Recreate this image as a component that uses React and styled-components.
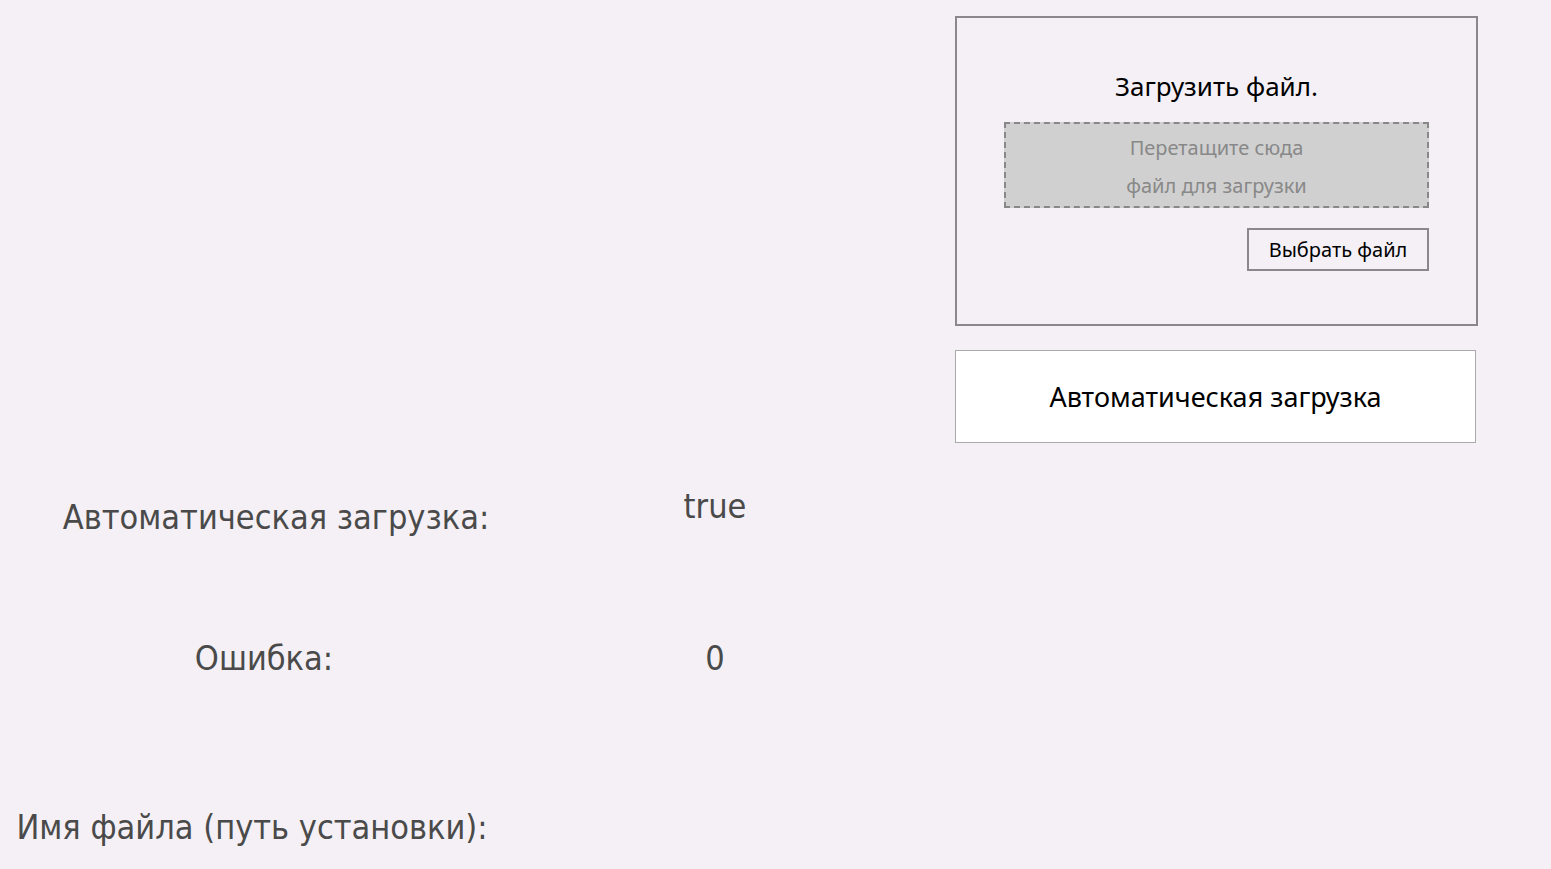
import React from "react";
import styled, { createGlobalStyle } from "styled-components";

const GlobalStyle = createGlobalStyle`
  html, body {
    margin: 0;
    padding: 0;
    background: #f4f0f5;
  }
  body {
    font-family: "Noto Sans", "Open Sans", sans-serif;
  }
`;

const Page = styled.div`
  width: 1551px;
  height: 869px;
  overflow: hidden;
  box-sizing: border-box;
  padding-top: 16px;
`;

const Top = styled.div`
  display: flex;
  justify-content: flex-end;
  padding-right: 73px;
`;

const Side = styled.div`
  width: 523px;
  display: flex;
  flex-direction: column;
  gap: 24px;
`;

const UploadBox = styled.div`
  border: 2px solid #8b888c;
  padding: 48px 47px 53px;
  display: flex;
  flex-direction: column;
  align-items: stretch;
`;

const UploadTitle = styled.div`
  text-align: center;
  font-size: 26px;
  color: #000;
  line-height: 40px;
  margin-bottom: 16px;
`;

const DropZone = styled.div`
  border: 2px dashed #888;
  background: #d0d0d0;
  color: #888;
  font-size: 20px;
  line-height: 38px;
  text-align: center;
  padding: 5px 0 1px;
`;

const PickButton = styled.button`
  align-self: flex-end;
  margin-top: 20px;
  width: 182px;
  height: 43px;
  border: 2px solid #8b888c;
  background: transparent;
  font-family: inherit;
  font-size: 20px;
  color: #000;
  padding: 0;
`;

const AutoButton = styled.button`
  width: 521px;
  height: 93px;
  border: 1px solid #aaa;
  background: #fff;
  font-family: inherit;
  font-size: 27px;
  color: #000;
  padding: 0;
`;

const Table = styled.div`
  display: grid;
  grid-template-columns: 552px 326px;
  margin-top: 44px;
  font-family: "DejaVu Sans Condensed", "Noto Sans", sans-serif;
  font-size: 34px;
  color: #4a4a4a;
  white-space: nowrap;
`;

const Label = styled.div`
  text-align: center;
  height: ${(p) => p.h}px;
  line-height: 60px;
  padding-right: ${(p) => p.shift || 0}px;
`;

const Value = styled.div`
  text-align: center;
  height: ${(p) => p.h}px;
  line-height: 60px;
  margin-top: ${(p) => p.up || 0}px;
`;

const rows = [
  { label: "Автоматическая загрузка:", value: "true", h: 141, up: -11 },
  { label: "Ошибка:", value: "0", h: 169, shift: 24 },
  { label: "Имя файла (путь установки):", value: "", h: 60, shift: 48 },
];

export default function App() {
  return (
    <Page>
      <GlobalStyle />
      <Top>
        <Side>
          <UploadBox>
            <UploadTitle>Загрузить файл.</UploadTitle>
            <DropZone>
              Перетащите сюда
              <br />
              файл для загрузки
            </DropZone>
            <PickButton>Выбрать файл</PickButton>
          </UploadBox>
          <AutoButton>Автоматическая загрузка</AutoButton>
        </Side>
      </Top>
      <Table>
        {rows.map((r) => (
          <React.Fragment key={r.label}>
            <Label h={r.h} shift={r.shift}>{r.label}</Label>
            <Value h={r.h} up={r.up}>{r.value}</Value>
          </React.Fragment>
        ))}
      </Table>
    </Page>
  );
}
